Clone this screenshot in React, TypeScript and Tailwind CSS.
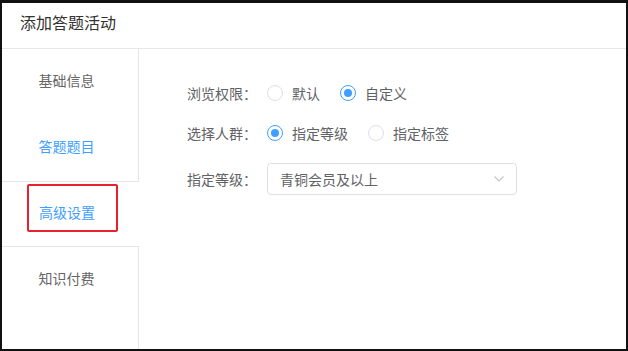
import React from "react";

const font = { fontFamily: '"Noto Sans CJK SC", "Noto Sans", sans-serif' };

function Radio({ checked, label }: { checked: boolean; label: string }) {
  return (
    <div className="flex items-center">
      <span
        className={
          checked
            ? "flex h-[16px] w-[16px] items-center justify-center rounded-full border border-[#409eff] bg-white"
            : "flex h-[16px] w-[16px] items-center justify-center rounded-full border border-[#dcdfe6] bg-white"
        }
      >
        {checked && <span className="h-[8px] w-[8px] rounded-full bg-[#409eff]" />}
      </span>
      <span className="ml-[9px] text-[14px] leading-[16px] text-[#606266]">{label}</span>
    </div>
  );
}

export default function App() {
  const items = [
    { label: "基础信息", state: "normal" },
    { label: "答题题目", state: "blue" },
    { label: "高级设置", state: "active" },
    { label: "知识付费", state: "normal" },
  ];
  return (
    <div
      className="relative box-border flex h-[351px] w-[628px] flex-col border-t-[3px] border-b-2 border-l-2 border-r-2 border-[#111111] bg-white"
      style={font}
    >
      <div className="box-border h-[46px] shrink-0 border-b border-[#e8e8e8] pl-[18px] pt-[11px] text-[16px] leading-[16px] text-[#333333]">
        添加答题活动
      </div>
      <div className="flex min-h-0 flex-1">
        <div className="flex w-[137px] shrink-0 flex-col">
          {items.map((it) => (
            <div
              key={it.label}
              className={
                it.state === "active"
                  ? "box-border flex h-[66px] items-center justify-center border-y border-[#e4e7ed] pb-[4px] pr-[7px] text-[14px] text-[#409eff]"
                  : it.state === "blue"
                  ? "box-border flex h-[66px] items-center justify-center border-r border-[#e4e7ed] pb-[4px] pr-[7px] text-[14px] text-[#409eff]"
                  : "box-border flex h-[66px] items-center justify-center border-r border-[#e4e7ed] pb-[4px] pr-[7px] text-[14px] text-[#666666]"
              }
            >
              {it.label}
            </div>
          ))}
          <div className="flex-1 border-r border-[#e4e7ed]" />
        </div>
        <div className="flex flex-1 flex-col pl-[48px] pt-[28px] text-[14px] text-[#606266]">
          <div className="flex h-8 items-center">
            <span className="w-[80px] leading-[16px]">浏览权限：</span>
            <div className="flex items-center gap-[20px]">
              <Radio checked={false} label="默认" />
              <Radio checked={true} label="自定义" />
            </div>
          </div>
          <div className="mt-2 flex h-8 items-center">
            <span className="w-[80px] leading-[16px]">选择人群：</span>
            <div className="flex items-center gap-[20px]">
              <Radio checked={true} label="指定等级" />
              <Radio checked={false} label="指定标签" />
            </div>
          </div>
          <div className="mt-[14px] flex h-[32px] items-center">
            <span className="w-[80px] leading-[16px]">指定等级：</span>
            <div className="box-border flex h-[32px] w-[250px] items-center justify-between rounded-[4px] border border-[#dcdfe6] pl-[12px] pr-[10px]">
              <span className="leading-[16px] text-[#606266]">青铜会员及以上</span>
              <svg width="14" height="14" viewBox="0 0 14 14" fill="none">
                <path d="M2.5 4.5 L7 9 L11.5 4.5" stroke="#c0c4cc" strokeWidth="1.1" />
              </svg>
            </div>
          </div>
        </div>
      </div>
      <div className="pointer-events-none absolute left-[25px] top-[181px] h-[48px] w-[91px] rounded-[2px] border-2 border-[#e8212e]" />
    </div>
  );
}
